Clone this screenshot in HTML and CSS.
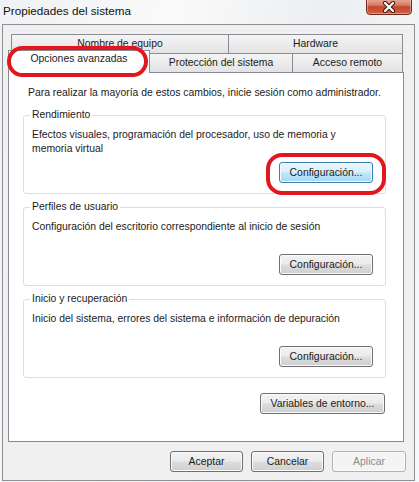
FILE: index.html
```html
<!DOCTYPE html>
<html>
  <head>
    <meta charset="utf-8">
    <title>Propiedades del sistema</title>
    <link rel="stylesheet" href="styles.css">
  </head>
  <body>
    <div class="window">
      <div class="titlebar">
        <span class="title">Propiedades del sistema</span>
        <span class="close">
          <svg width="14" height="12" viewBox="0 0 14 12">
            <path d="M3 2 L11 10 M11 2 L3 10" stroke="#3b1a14" stroke-width="4.2" stroke-linecap="round" fill="none"/>
            <path d="M3 2 L11 10 M11 2 L3 10" stroke="#ffffff" stroke-width="2.2" stroke-linecap="round" fill="none"/>
          </svg>
        </span>
      </div>
      <div class="client">
        <div class="tab-row back">
          <div class="tab tab_name">Nombre de equipo</div>
          <div class="tab tab_hw">Hardware</div>
        </div>
        <div class="tab-row front">
          <div class="tab active">Opciones avanzadas<span class="mark"></span></div>
          <div class="tab tab_prot">Protección del sistema</div>
          <div class="tab tab_acc">Acceso remoto</div>
        </div>
        <div class="panel">
          <p class="note">Para realizar la mayoría de estos cambios, inicie sesión como administrador.</p>

          <fieldset class="group">
            <legend>Rendimiento</legend>
            <p class="desc">Efectos visuales, programación del procesador, uso de memoria y memoria virtual</p>
            <div class="group-actions">
              <span class="marked">
                <button class="btn btn_cfg default">Configuración...</button>
                <span class="mark"></span>
              </span>
            </div>
          </fieldset>

          <fieldset class="group">
            <legend>Perfiles de usuario</legend>
            <p class="desc">Configuración del escritorio correspondiente al inicio de sesión</p>
            <div class="group-actions">
              <button class="btn btn_cfg">Configuración...</button>
            </div>
          </fieldset>

          <fieldset class="group">
            <legend>Inicio y recuperación</legend>
            <p class="desc">Inicio del sistema, errores del sistema e información de depuración</p>
            <div class="group-actions">
              <button class="btn btn_cfg">Configuración...</button>
            </div>
          </fieldset>

          <div class="panel-actions">
            <button class="btn btn_var">Variables de entorno...</button>
          </div>
        </div>
        <div class="footer">
          <button class="btn btn_dlg">Aceptar</button>
          <button class="btn btn_dlg">Cancelar</button>
          <button class="btn btn_dlg btn_apply" disabled>Aplicar</button>
        </div>
      </div>
    </div>
  </body>
</html>
```

FILE: styles.css
```css
* {
  box-sizing: border-box;
}

body {
  margin: 0;
  font-family: "Liberation Sans", Arial, sans-serif;
  font-size: 10.4px;
  color: #1b1b1b;
}

p {
  margin: 0;
}

.window {
  width: 419px;
  height: 482px;
  overflow: hidden;
  background: linear-gradient(100deg, #eff1f4 0%, #fafafa 35%, #eceef1 65%, #f7f8f9 100%);
}

/* title bar */

.titlebar {
  height: 24px;
  display: flex;
  justify-content: space-between;
  align-items: flex-start;
}

.title {
  font-size: 11.7px;
  line-height: 14px;
  margin: 4px 0 0 3px;
  color: #111;
}

.close {
  width: 46px;
  height: 18px;
  margin: -3px 7px 0 0;
  display: flex;
  align-items: center;
  justify-content: center;
  padding-top: 2px;
  border: 1px solid #6e2b21;
  border-radius: 0 0 4px 4px;
  background: linear-gradient(#eab3a2 0%, #d97a63 45%, #c64630 55%, #d0603f 100%);
  box-shadow: inset 0 0 0 1px rgba(255, 255, 255, 0.35);
}

/* client area */

.client {
  margin-left: 2px;
  width: 413px;
  height: 457px;
  padding-top: 9px;
  border: 1px solid #8e8f90;
  background: #f0f0f0;
}

.tab-row {
  display: flex;
  align-items: flex-start;
  height: 19px;
}

.tab-row.back {
  margin-left: 8px;
}

.tab-row.front {
  margin-left: 5px;
}

.tab {
  height: 19px;
  line-height: 17px;
  text-align: center;
  white-space: nowrap;
  border: 1px solid #898c95;
  border-bottom: none;
  background: linear-gradient(#f4f4f4, #e3e3e3);
}

.tab_name {
  width: 218px;
}

.tab_hw {
  width: 174px;
  border-left: none;
}

.tab.active {
  position: relative;
  z-index: 1;
  width: 142px;
  height: 23px;
  margin-top: -3px;
  padding-top: 1px;
  line-height: 14px;
  background: #fff;
}

.tab_prot {
  width: 143px;
  border-left: none;
}

.tab_acc {
  width: 110px;
  border-left: none;
}

/* red marks drawn over the screenshot */

.mark {
  position: absolute;
  z-index: 2;
  border: 4px solid #e2161f;
  border-radius: 16px;
  pointer-events: none;
}

.tab .mark {
  left: -2px;
  top: -5px;
  right: 1px;
  bottom: -4px;
}

.marked {
  position: relative;
  display: inline-flex;
}

.marked .mark {
  left: -13px;
  right: -13px;
  top: -9px;
  bottom: -12px;
}

/* panel */

.panel {
  margin-left: 5px;
  width: 396px;
  height: 370px;
  padding: 13px 17px 0 14px;
  border: 1px solid #898c95;
  background: #fff;
}

.note {
  line-height: 14px;
  padding-left: 5px;
  white-space: nowrap;
}

.group {
  margin: 8px 0 0;
  min-width: 0;
  padding: 6px 12px 10px 8px;
  border: 1px solid #d5dfe5;
  border-radius: 3px;
}

.group + .group {
  margin-top: 6px;
}

.group legend {
  padding: 0 2px;
  margin-left: -2px;
  line-height: 14px;
}

.desc {
  height: 28px;
  line-height: 14px;
}

.group-actions {
  display: flex;
  justify-content: flex-end;
  margin-top: 6px;
}

.panel-actions {
  display: flex;
  justify-content: flex-end;
  margin-top: 15px;
  padding-right: 1px;
}

/* buttons */

.btn {
  height: 21px;
  padding: 0;
  font-family: inherit;
  font-size: 10.4px;
  color: #1b1b1b;
  border: 1px solid #707070;
  border-radius: 3px;
  background: linear-gradient(#f2f2f2 0%, #ebebeb 48%, #dddddd 52%, #cfcfcf 100%);
  box-shadow: inset 0 0 0 1px #fbfbfb;
}

.btn.default {
  border-color: #3c7fb1;
  background: linear-gradient(#eaf6fd 0%, #d9f0fc 48%, #bee6fd 52%, #a7d9f5 100%);
  box-shadow: inset 0 0 0 1px #f3fbff;
}

.btn_cfg {
  width: 94px;
}

.btn_var {
  width: 125px;
}

.btn_dlg {
  width: 73px;
}

.btn_apply {
  width: 74px;
  color: #8a8a8a;
  border-color: #adb2b5;
  background: #f4f4f4;
}

.footer {
  display: flex;
  justify-content: flex-end;
  gap: 8px;
  margin-top: 9px;
  padding-right: 8px;
}
```
